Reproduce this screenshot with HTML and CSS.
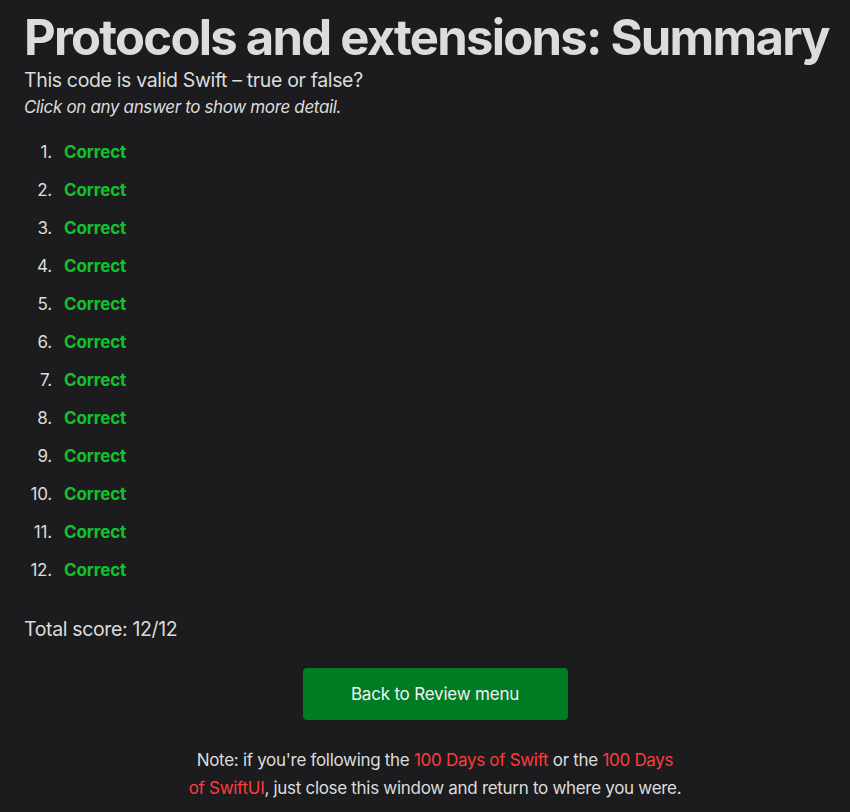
FILE: index.html
```html
<!DOCTYPE html>
<html>
<head>
<meta charset="utf-8">
<link rel="stylesheet" href="styles.css">
</head>
<body>
<main class="page">
  <h1 class="title">Protocols and extensions: Summary</h1>
  <p class="subtitle">This code is valid Swift – true or false?</p>
  <p class="hint">Click on any answer to show more detail.</p>
  <ol class="answers">
    <li><span class="correct">Correct</span></li>
    <li><span class="correct">Correct</span></li>
    <li><span class="correct">Correct</span></li>
    <li><span class="correct">Correct</span></li>
    <li><span class="correct">Correct</span></li>
    <li><span class="correct">Correct</span></li>
    <li><span class="correct">Correct</span></li>
    <li><span class="correct">Correct</span></li>
    <li><span class="correct">Correct</span></li>
    <li><span class="correct">Correct</span></li>
    <li><span class="correct">Correct</span></li>
    <li><span class="correct">Correct</span></li>
  </ol>
  <p class="score">Total score: 12/12</p>
  <div class="actions"><a class="button" href="#">Back to Review menu</a></div>
  <p class="note">Note: if you're following the <a href="#">100 Days of Swift</a> or the <a href="#">100 Days of SwiftUI</a>, just close this window and return to where you were.</p>
</main>
</body>
</html>
```

FILE: styles.css
```css
html, body {
  margin: 0;
  padding: 0;
  background: #1c1c1e;
}
body {
  font-family: Inter, "Noto Sans", sans-serif;
  color: #dcdcdc;
}
.page {
  padding: 0 4px 0 24px;
}
.title {
  font-size: 49px;
  font-weight: 700;
  line-height: 58px;
  margin: 9px 0 0;
  letter-spacing: -1.75px;
  white-space: nowrap;
}
.subtitle {
  font-size: 19.5px;
  line-height: 26px;
  margin: 0;
  letter-spacing: -0.35px;
}
.hint {
  font-size: 17px;
  font-style: italic;
  line-height: 28px;
  margin: 0;
  letter-spacing: -0.35px;
}
.answers {
  list-style: none;
  counter-reset: item;
  margin: 12px 0 0;
  padding: 0;
  font-size: 17px;
  line-height: 38px;
}
.answers li {
  display: flex;
  counter-increment: item;
}
.answers li::before {
  content: counter(item) ".";
  width: 28px;
  margin-right: 12px;
  text-align: right;
  letter-spacing: -0.2px;
}
.correct {
  color: #0fc42b;
  font-weight: 700;
  letter-spacing: -0.1px;
}
.score {
  font-size: 19.5px;
  line-height: 28px;
  margin: 26px 0 0;
  letter-spacing: -0.35px;
}
.actions {
  display: flex;
  justify-content: center;
  margin-top: 25px;
}
.button {
  display: flex;
  align-items: center;
  justify-content: center;
  width: 265px;
  height: 52px;
  background: #007c24;
  color: #f2f2f2;
  border-radius: 4px;
  text-decoration: none;
  font-size: 17px;
  letter-spacing: -0.2px;
}
.note {
  max-width: 495px;
  margin: 26px auto 0;
  text-align: center;
  font-size: 17px;
  line-height: 28px;
  letter-spacing: -0.3px;
}
.note a {
  color: #ff3b3b;
  text-decoration: none;
}
```
